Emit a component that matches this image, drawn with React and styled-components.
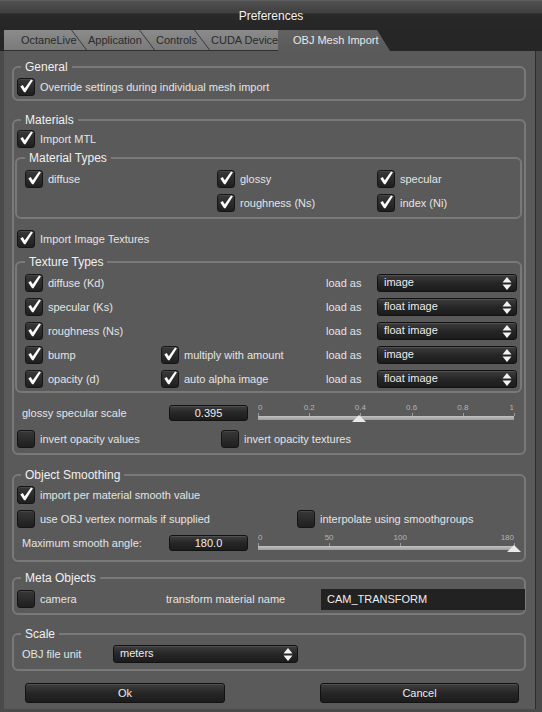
import React from 'react';
import styled, { createGlobalStyle } from 'styled-components';

const GlobalStyle = createGlobalStyle`
  html, body { margin: 0; padding: 0; background: #3a3a3a; }
  body {
    font-family: "Liberation Sans", Arial, sans-serif;
    font-size: 11px;
    color: #e4e4e4;
  }
  * { box-sizing: border-box; }
`;

const Window = styled.div`
  width: 542px;
  height: 712px;
  background: #4a4a4a;
  display: flex;
  flex-direction: column;
  overflow: hidden;
`;

const TitleBar = styled.div`
  height: 30px;
  flex: none;
  display: flex;
  align-items: center;
  justify-content: center;
  font-size: 12px;
  color: #f2f2f2;
  border-top: 1px solid #5e5e5e;
  background: linear-gradient(#515151 0, #3f3f3f 12px, #292929 13px, #262626 100%);
`;

const TabBar = styled.div`
  height: 21px;
  flex: none;
  display: flex;
  padding-left: 4px;
  background: #262626;
`;

const Tab = styled.div`
  position: relative;
  flex: none;
  width: ${p => p.$w}px;
  height: 21px;
  padding-left: ${p => p.$pl}px;
  line-height: 20px;
  color: #2a2a2a;
  background: linear-gradient(#8b8b8b, #7a7a7a);
  border-bottom: 1px solid #303030;
  white-space: nowrap;
  &::after {
    content: '';
    position: absolute;
    top: 0;
    right: 8px;
    width: 1px;
    height: 20px;
    background: #3a3a3a;
    transform: skewX(37deg);
    transform-origin: top left;
    z-index: 2;
  }
`;

const ActiveTab = styled.div`
  position: relative;
  z-index: 3;
  flex: none;
  width: 112px;
  height: 21px;
  margin-left: -13px;
  padding-left: 15px;
  line-height: 20px;
  color: #e8e8e8;
  background: linear-gradient(#626262, #5a5a5a);
  clip-path: polygon(0 0, 99px 0, 112px 100%, 0 100%);
  white-space: nowrap;
`;

const Panel = styled.div`
  flex: 1;
  margin: 0 6px 3px 4px;
  padding: 9px 9px 0 8px;
  background: #5a5a5a;
  border-right: 1px solid #2c2c2c;
  display: flex;
  flex-direction: column;
`;

const Group = styled.fieldset`
  margin: ${p => p.$mt || 0}px ${p => p.$mr || 0}px 0 ${p => p.$ml || 0}px;
  padding: 0;
  min-width: 0;
  border: 2px solid #797979;
  border-radius: 6px;
`;

const Legend = styled.legend`
  font-size: 12px;
  line-height: 14px;
  padding: 0 4px;
  margin-left: ${p => p.$ml || 7}px;
  color: #f0f0f0;
`;

const Body = styled.div`
  padding: ${p => p.$pad};
`;

const Row = styled.div`
  height: 24px;
  display: flex;
  align-items: center;
  margin-top: ${p => p.$mt || 0}px;
`;

const Grid = styled.div`
  display: grid;
  grid-template-columns: ${p => p.$cols};
  grid-auto-rows: 24px;
  align-items: center;
  margin-top: ${p => p.$mt || 0}px;
`;

const Item = styled.div`
  display: flex;
  align-items: center;
  gap: 5px;
  white-space: nowrap;
`;

const Label = styled.span`
  padding-left: ${p => p.$pl || 0}px;
  white-space: nowrap;
`;

const Box = styled.span`
  flex: none;
  width: 18px;
  height: 18px;
  border-radius: 3px;
  border: 1px solid #151515;
  background: linear-gradient(#383838, #1f1f1f);
  box-shadow: inset 0 1px 0 rgba(255, 255, 255, 0.08);
  display: flex;
  align-items: center;
  justify-content: center;
  overflow: visible;
`;

const Check = ({ on }) => (
  <Box>
    {on && (
      <svg width="18" height="18" viewBox="0 0 18 18" style={{ marginTop: -2 }}>
        <path d="M2.6 9.6 L5.3 7.9 L7.6 11.6 L14.6 1.6 L16.8 2.4 L8.4 16 L6.8 16 Z" fill="#fbfbfb" />
      </svg>
    )}
  </Box>
);

const CheckItem = ({ on, children }) => (
  <Item>
    <Check on={on} />
    <span>{children}</span>
  </Item>
);

const DarkButton = styled.div`
  width: ${p => p.$w}px;
  height: ${p => p.$h || 19}px;
  border: 1px solid #121212;
  border-radius: 3px;
  background: linear-gradient(#3e3e3e, #262626 50%, #1c1c1c);
  box-shadow: inset 0 1px 0 rgba(255, 255, 255, 0.1);
  color: #ececec;
  display: flex;
  align-items: center;
  justify-content: ${p => (p.$center ? 'center' : 'space-between')};
  padding: 0 ${p => (p.$center ? 0 : 4)}px 0 ${p => (p.$center ? 0 : 6)}px;
  white-space: nowrap;
`;

const SelectText = styled.span`
  margin-top: -3px;
`;

const Arrows = () => (
  <svg width="10" height="15" viewBox="0 0 10 15">
    <path d="M0.5 6.5 L5 1 L9.5 6.5 Z M0.5 8.5 L5 14 L9.5 8.5 Z" fill="#f2f2f2" />
  </svg>
);

const Select = ({ w, children }) => (
  <DarkButton $w={w} $h={18}>
    <SelectText>{children}</SelectText>
    <Arrows />
  </DarkButton>
);

const TextField = styled.div`
  width: 204px;
  height: 21px;
  background: #222;
  color: #eee;
  padding-left: 6px;
  display: flex;
  align-items: center;
`;

const SliderWrap = styled.div`
  position: relative;
  width: 256px;
  height: 24px;
  padding-top: 3px;
`;

const Ticks = styled.div`
  position: relative;
  height: 12px;
`;

const Tick = styled.div`
  position: absolute;
  top: 0;
  bottom: 0;
  width: 0;
`;

const TickLabel = styled.span`
  position: absolute;
  top: 0;
  left: 0;
  transform: translateX(${p => p.$shift});
  font-size: 8px;
  line-height: 8px;
  color: #b4b4b4;
  white-space: nowrap;
`;

const TickMark = styled.span`
  position: absolute;
  bottom: 0;
  left: 0;
  width: 1px;
  height: 3px;
  background: #9a9a9a;
`;

const Track = styled.div`
  height: 4px;
  background: linear-gradient(#c2c2c2, #9d9d9d);
`;

const Handle = styled.div`
  position: absolute;
  bottom: 3px;
  width: 0;
  height: 0;
  border-left: 7px solid transparent;
  border-right: 7px solid transparent;
  border-bottom: 7px solid #e9e9e9;
  transform: translateX(-50%);
`;

const Slider = ({ ticks, max, value }) => (
  <SliderWrap>
    <Ticks>
      {ticks.map((t, i) => (
        <Tick key={t} style={{ left: `${(t / max) * 100}%` }}>
          <TickLabel $shift={i === 0 ? '0' : i === ticks.length - 1 ? '-100%' : '-50%'}>{t}</TickLabel>
          <TickMark />
        </Tick>
      ))}
    </Ticks>
    <Track />
    <Handle style={{ left: `${(value / max) * 100}%` }} />
  </SliderWrap>
);

const Buttons = styled.div`
  display: flex;
  justify-content: space-between;
  margin: 12px 7px 0 13px;
`;

const textures = [
  ['diffuse (Kd)', null, 'image'],
  ['specular (Ks)', null, 'float image'],
  ['roughness (Ns)', null, 'float image'],
  ['bump', 'multiply with amount', 'image'],
  ['opacity (d)', 'auto alpha image', 'float image'],
];

export default function App() {
  return (
    <Window>
      <GlobalStyle />
      <TitleBar>Preferences</TitleBar>
      <TabBar>
        <Tab $w={76} $pl={17}>OctaneLive</Tab>
        <Tab $w={68} $pl={8}>Application</Tab>
        <Tab $w={55} $pl={8}>Controls</Tab>
        <Tab $w={88} $pl={8}>CUDA Devices</Tab>
        <ActiveTab>OBJ Mesh Import</ActiveTab>
      </TabBar>
      <Panel>
        <Group>
          <Legend>General</Legend>
          <Body $pad="1px 3px 0">
            <Row>
              <CheckItem on>Override settings during individual mesh import</CheckItem>
            </Row>
          </Body>
        </Group>

        <Group $mt={12}>
          <Legend>Materials</Legend>
          <Body $pad="0 3px 2px">
            <Row>
              <CheckItem on>Import MTL</CheckItem>
            </Row>
            <Group $ml={-2} $mr={-1}>
              <Legend $ml={8}>Material Types</Legend>
              <Body $pad="2px 3px 2px 8px">
                <Grid $cols="192px 160px 1fr">
                  <CheckItem on>diffuse</CheckItem>
                  <CheckItem on>glossy</CheckItem>
                  <CheckItem on>specular</CheckItem>
                  <span />
                  <CheckItem on>roughness (Ns)</CheckItem>
                  <CheckItem on>index (Ni)</CheckItem>
                </Grid>
              </Body>
            </Group>
            <Row $mt={8}>
              <CheckItem on>Import Image Textures</CheckItem>
            </Row>
            <Group $mt={4} $ml={-2} $mr={-1}>
              <Legend $ml={8}>Texture Types</Legend>
              <Body $pad="2px 3px 0 8px">
                <Grid $cols="136px 165px 51px 140px">
                  {textures.map(([name, extra, load]) => (
                    <React.Fragment key={name}>
                      <CheckItem on>{name}</CheckItem>
                      {extra ? <CheckItem on>{extra}</CheckItem> : <span />}
                      <Label>load as</Label>
                      <Select w={140}>{load}</Select>
                    </React.Fragment>
                  ))}
                </Grid>
              </Body>
            </Group>
            <Grid $mt={8} $cols="152px 79px 10px 256px">
              <Label $pl={5}>glossy specular scale</Label>
              <DarkButton $w={79} $h={16} $center>0.395</DarkButton>
              <span />
              <Slider ticks={[0, 0.2, 0.4, 0.6, 0.8, 1]} max={1} value={0.395} />
            </Grid>
            <Grid $mt={2} $cols="204px 1fr">
              <CheckItem>invert opacity values</CheckItem>
              <CheckItem>invert opacity textures</CheckItem>
            </Grid>
          </Body>
        </Group>

        <Group $mt={13}>
          <Legend>Object Smoothing</Legend>
          <Body $pad="1px 3px 5px">
            <Row>
              <CheckItem on>import per material smooth value</CheckItem>
            </Row>
            <Grid $cols="280px 1fr">
              <CheckItem>use OBJ vertex normals if supplied</CheckItem>
              <CheckItem>interpolate using smoothgroups</CheckItem>
            </Grid>
            <Grid $cols="152px 79px 10px 256px">
              <Label $pl={5}>Maximum smooth angle:</Label>
              <DarkButton $w={79} $h={16} $center>180.0</DarkButton>
              <span />
              <Slider ticks={[0, 50, 100, 180]} max={180} value={180} />
            </Grid>
          </Body>
        </Group>

        <Group $mt={9}>
          <Legend>Meta Objects</Legend>
          <Body $pad="2px 3px 2px">
            <Grid $cols="149px 155px 204px">
              <CheckItem>camera</CheckItem>
              <Label>transform material name</Label>
              <TextField>CAM_TRANSFORM</TextField>
            </Grid>
          </Body>
        </Group>

        <Group $mt={12}>
          <Legend>Scale</Legend>
          <Body $pad="1px 3px 3px">
            <Grid $cols="96px 185px">
              <Label $pl={5}>OBJ file unit</Label>
              <Select w={185}>meters</Select>
            </Grid>
          </Body>
        </Group>

        <Buttons>
          <DarkButton $w={200} $h={20} $center>Ok</DarkButton>
          <DarkButton $w={199} $h={20} $center>Cancel</DarkButton>
        </Buttons>
      </Panel>
    </Window>
  );
}
